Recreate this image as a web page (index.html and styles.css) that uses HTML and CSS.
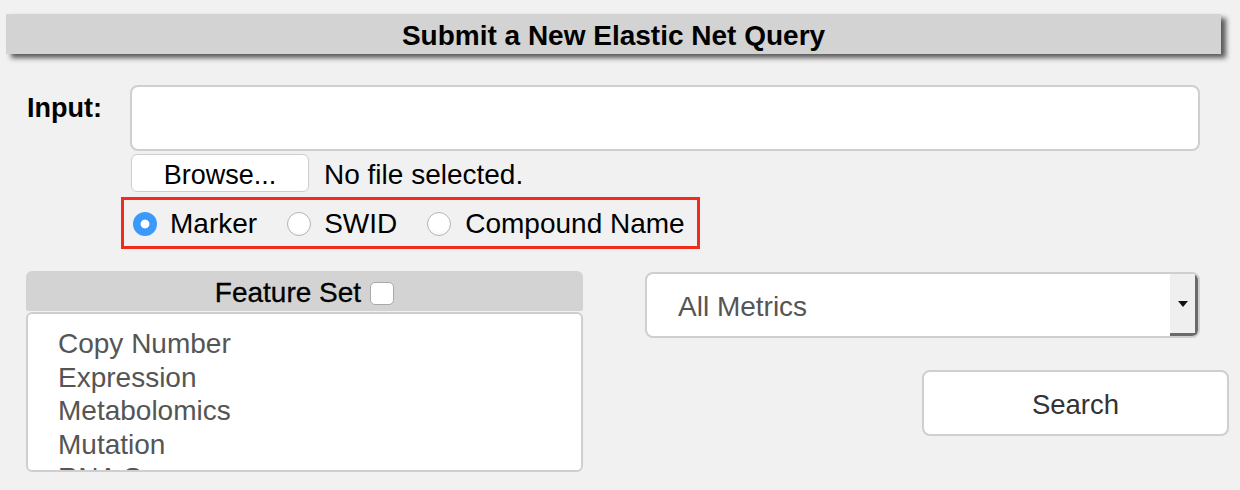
FILE: index.html
```html
<!DOCTYPE html>
<html>
<head>
<meta charset="utf-8">
<link rel="stylesheet" href="styles.css">
</head>
<body>
<div class="page">
  <h1 class="title">Submit a New Elastic Net Query</h1>

  <div class="input-row">
    <div class="label">Input:</div>
    <div class="field-col">
      <div class="textarea"></div>
      <div class="file-row">
        <div class="browse">Browse...</div>
        <div class="nofile">No file selected.</div>
      </div>
      <div class="radio-box">
        <span class="radio checked"></span><span class="rlabel">Marker</span>
        <span class="radio"></span><span class="rlabel">SWID</span>
        <span class="radio"></span><span class="rlabel">Compound Name</span>
      </div>
    </div>
  </div>

  <div class="lower">
    <div class="left-panel">
      <div class="fs-header">
        <span class="fs-title">Feature Set</span>
        <span class="checkbox"></span>
      </div>
      <div class="fs-list">
        <div class="item">Copy Number</div>
        <div class="item">Expression</div>
        <div class="item">Metabolomics</div>
        <div class="item">Mutation</div>
        <div class="item">RNA Seq</div>
      </div>
    </div>
    <div class="right-panel">
      <div class="select">
        <span class="select-text">All Metrics</span>
        <span class="select-btn"><span class="arrow"></span></span>
      </div>
      <div class="search">Search</div>
    </div>
  </div>
</div>
</body>
</html>
```

FILE: styles.css
```css
html, body {
  margin: 0;
  padding: 0;
  background: #f1f1f1;
}

body {
  width: 1240px;
  height: 490px;
  overflow: hidden;
  font-family: "Liberation Sans", Arial, Helvetica, sans-serif;
  color: #000;
}

.page {
  display: flex;
  flex-direction: column;
}

.title {
  margin: 14px 19px 0 6px;
  height: 40px;
  box-sizing: border-box;
  padding-top: 3px;
  line-height: 37px;
  background: #d3d3d3;
  font-size: 28px;
  font-weight: bold;
  text-align: center;
  box-shadow: 5px 4px 5px #5a5a5a;
}

.input-row {
  display: flex;
  margin-top: 31px;
  padding-left: 27px;
}

.label {
  width: 94px;
  font-size: 27px;
  line-height: 28px;
  font-weight: bold;
  padding-top: 9px;
}

.field-col {
  display: flex;
  flex-direction: column;
}

.textarea {
  margin-left: 9px;
  width: 1070px;
  height: 66px;
  box-sizing: border-box;
  background: #fff;
  border: 2px solid #cfcfcf;
  border-radius: 8px;
}

.file-row {
  display: flex;
  align-items: center;
  margin-top: 3px;
  margin-left: 10px;
  gap: 15px;
  font-size: 28px;
}

.browse {
  width: 178px;
  height: 38px;
  box-sizing: border-box;
  background: #fff;
  border: 1px solid #cdcdcd;
  border-radius: 6px;
  display: flex;
  align-items: center;
  justify-content: center;
  padding-top: 4px;
  font-size: 27px;
}

.nofile {
  padding-top: 4px;
}

.radio-box {
  margin-top: 5px;
  width: 579px;
  height: 52px;
  box-sizing: border-box;
  border: 3px solid #f22b1f;
  display: flex;
  align-items: center;
  padding-left: 9px;
  font-size: 28px;
}

.radio {
  width: 24px;
  height: 24px;
  box-sizing: border-box;
  border-radius: 50%;
  border: 1px solid #b5b5b5;
  background: radial-gradient(circle at 50% 40%, #ffffff 55%, #ececec 100%);
  flex: none;
  margin-top: 1px;
}

.radio.checked {
  border: none;
  background: radial-gradient(circle, #ffffff 0 4px, #3b99fc 4.8px);
}

.rlabel {
  margin-left: 13px;
  margin-right: 30px;
  padding-top: 2px;
}

.rlabel:last-child {
  margin-right: 0;
  margin-left: 14px;
}

.lower {
  display: flex;
  margin-top: 22px;
}

.left-panel {
  margin-left: 26px;
  width: 557px;
  display: flex;
  flex-direction: column;
}

.fs-header {
  height: 40px;
  box-sizing: border-box;
  background: #d3d3d3;
  border-radius: 6px 6px 2px 2px;
  display: flex;
  align-items: center;
  justify-content: center;
  gap: 9px;
  font-size: 28px;
  color: #000;
  padding-left: 0;
}

.fs-title {
  padding-top: 3px;
  -webkit-text-stroke: 0.3px #000;
}

.checkbox {
  width: 24px;
  height: 23px;
  box-sizing: border-box;
  background: #fff;
  border: 1px solid #a9a9a9;
  border-radius: 5px;
  margin-top: 4px;
}

.fs-list {
  margin-top: 1px;
  height: 160px;
  box-sizing: border-box;
  background: #fff;
  border: 2px solid #cfcfcf;
  border-radius: 6px;
  overflow: hidden;
  padding: 13px 0 0 30px;
  font-size: 28px;
  color: #555;
}

.item {
  line-height: 33.5px;
}

.right-panel {
  margin-left: 62px;
  width: 584px;
  display: flex;
  flex-direction: column;
}

.select {
  margin-top: 1px;
  width: 555px;
  height: 66px;
  box-sizing: border-box;
  background: #fff;
  border: 2px solid #cfcfcf;
  border-radius: 8px;
  display: flex;
  align-items: stretch;
  overflow: hidden;
}

.select-text {
  flex: 1;
  display: flex;
  align-items: center;
  padding-left: 31px;
  padding-top: 3px;
  font-size: 28px;
  color: #555;
}

.select-btn {
  width: 28px;
  box-sizing: border-box;
  background: #efefef;
  border-right: 3px solid #6a6a6a;
  border-bottom: 3px solid #6a6a6a;
  border-radius: 0 0 3px 0;
  display: flex;
  justify-content: center;
  padding-top: 27px;
}

.arrow {
  width: 0;
  height: 0;
  border-left: 5px solid transparent;
  border-right: 5px solid transparent;
  border-top: 6px solid #111;
}

.search {
  align-self: flex-end;
  margin-top: 32px;
  width: 307px;
  height: 66px;
  box-sizing: border-box;
  background: #fff;
  border: 2px solid #cfcfcf;
  border-radius: 8px;
  display: flex;
  align-items: center;
  justify-content: center;
  padding-top: 3px;
  font-size: 27.5px;
  color: #333;
}
```
